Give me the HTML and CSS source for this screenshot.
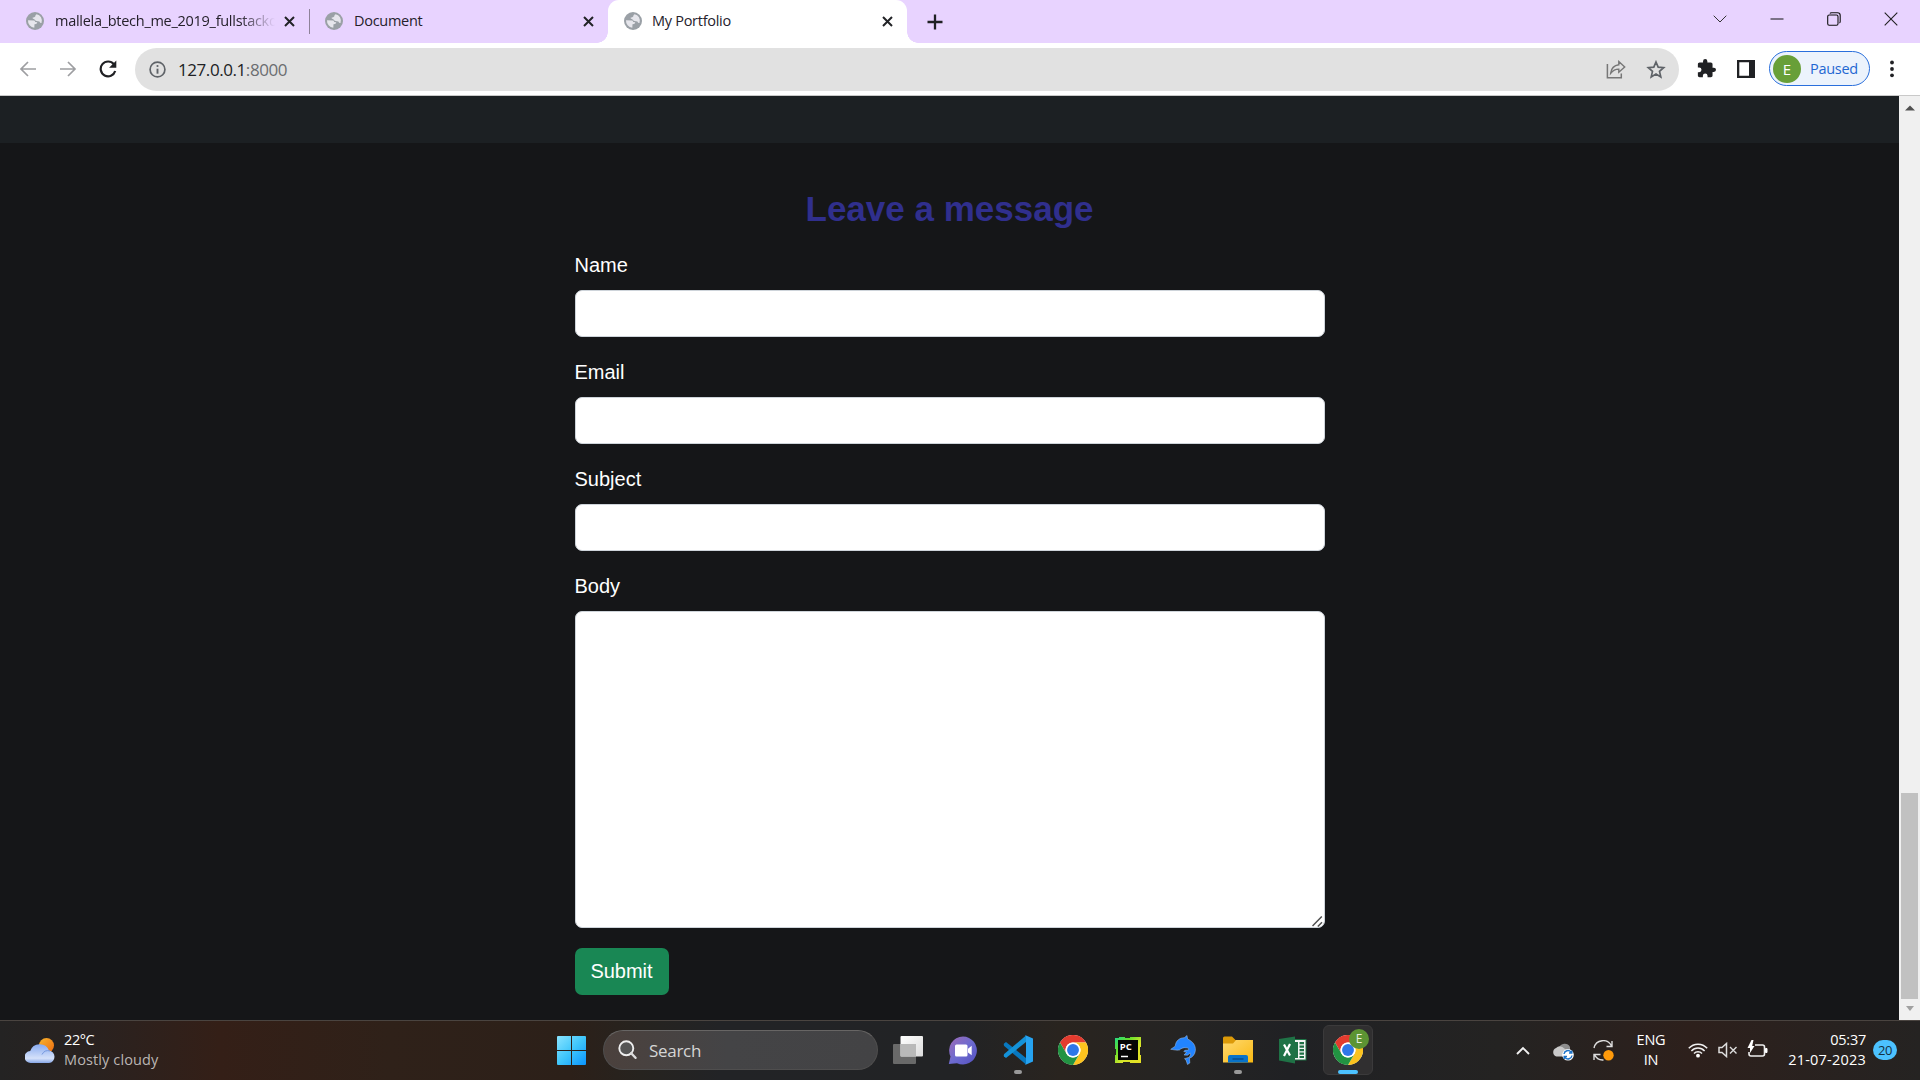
FILE: index.html
```html
<!DOCTYPE html>
<html lang="en">
<head>
<meta charset="utf-8">
<title>My Portfolio</title>
<link rel="stylesheet" href="styles.css">
</head>
<body>
<svg class="defs" width="0" height="0">
  <defs>
    <linearGradient id="gWin" x1="0" y1="0" x2="1" y2="1"><stop offset="0" stop-color="#8ae4ff"/><stop offset=".5" stop-color="#3fc6fb"/><stop offset="1" stop-color="#0a95ff"/></linearGradient>
    <linearGradient id="gSun" x1="0" y1="0" x2="1" y2="1"><stop offset="0" stop-color="#f8b52c"/><stop offset="1" stop-color="#ee6a10"/></linearGradient>
    <linearGradient id="gCloud" x1="0" y1="0" x2="0" y2="1"><stop offset="0" stop-color="#87aaf0"/><stop offset=".75" stop-color="#d5e1fa"/><stop offset="1" stop-color="#86a6e6"/></linearGradient>
    <linearGradient id="gChat" x1="0" y1="0" x2="1" y2="1"><stop offset="0" stop-color="#a06ab4"/><stop offset=".5" stop-color="#6d6bd0"/><stop offset="1" stop-color="#5450c0"/></linearGradient>
    <linearGradient id="gFold" x1="0" y1="0" x2="1" y2="1"><stop offset="0" stop-color="#ffd970"/><stop offset="1" stop-color="#f9b912"/></linearGradient>
    <linearGradient id="gPc" x1="0" y1="0" x2="1" y2="1"><stop offset="0" stop-color="#21d789"/><stop offset=".3" stop-color="#62e02c"/><stop offset=".6" stop-color="#d6e52b"/><stop offset="1" stop-color="#e8e022"/></linearGradient>
    <linearGradient id="gTask" x1="0" y1="0" x2="1" y2="1"><stop offset="0" stop-color="#ffffff"/><stop offset="1" stop-color="#dcdcdc"/></linearGradient>
    <symbol id="globe" viewBox="0 0 18 18"><circle cx="9" cy="9" r="9" fill="#9aa0a6"/><path d="M2 8.300 8.200 8.500Q9 8.600 9.200 10L11.200 10.200Q11.400 11.500 10 12L8.500 12.200 8.300 15.800A7 7 0 0 1 2 8.300ZM10.600 2.200Q13.500 2.600 15 5.200 16.500 8 15.500 11 14 11.200 13.400 9.500L10.500 9Q8.500 8.400 8.200 7 6.500 7 6.500 5.700 8.500 5.500 9.200 4.500Q9.400 2.800 10.600 2.200Z" fill="#e6e6ec"/></symbol>
    <symbol id="cross" viewBox="0 0 11 11"><path d="M1 1l9 9M10 1l-9 9" stroke="#222327" stroke-width="2" fill="none"/></symbol>
    <symbol id="chrome" viewBox="0 0 48 48"><circle cx="24" cy="24" r="24" fill="#fff"/><path d="M24 12h20.800A24 24 0 0 0 3.200 12l10.400 18A12 12 0 0 1 24 12Z" fill="#e33b2e"/><path d="M34.400 30 24 48A24 24 0 0 0 44.800 12H24a12 12 0 0 1 10.400 18Z" fill="#fcc31e"/><path d="M13.600 30 3.200 12A24 24 0 0 0 24 48l10.400-18a12 12 0 0 1-20.800 0Z" fill="#229342"/><circle cx="24" cy="24" r="12" fill="#fff"/><circle cx="24" cy="24" r="9.500" fill="#2f77e8"/></symbol>
  </defs>
</svg>

<header class="tabstrip">
  <div class="tab tab-first">
    <svg class="fav"><use href="#globe"/></svg>
    <span class="tab-title faded">mallela_btech_me_2019_fullstackd</span>
    <svg class="x"><use href="#cross"/></svg>
  </div>
  <div class="tab tab-second">
    <svg class="fav"><use href="#globe"/></svg>
    <span class="tab-title">Document</span>
    <svg class="x"><use href="#cross"/></svg>
  </div>
  <div class="tab tab-active">
    <svg class="fav"><use href="#globe"/></svg>
    <span class="tab-title">My Portfolio</span>
    <svg class="x"><use href="#cross"/></svg>
  </div>
  <svg class="plus" viewBox="0 0 16 16"><path d="M8 .5v15M.5 8h15" stroke="#202124" stroke-width="2.300"/></svg>
  <div class="winctl">
    <svg width="14" height="14" viewBox="0 0 14 14"><path d="M.7 3.700 7 10l6.300-6.300" stroke="#333" fill="none"/></svg>
    <svg width="14" height="14" viewBox="0 0 14 14"><path d="M.5 7h13" stroke="#111"/></svg>
    <svg width="14" height="14" viewBox="0 0 14 14"><rect x=".7" y="3" width="10.300" height="10.300" rx="1.500" fill="none" stroke="#111" stroke-width="1.100"/><path d="M3 1.500Q3.300.8 4.500.8h6q2.700 0 2.700 2.700v6q0 1.200-.8 1.500" fill="none" stroke="#111" stroke-width="1.100"/></svg>
    <svg width="14" height="14" viewBox="0 0 14 14"><path d="M.7.700l12.600 12.600M13.300.700.700 13.300" stroke="#222" stroke-width="1.100"/></svg>
  </div>
</header>

<nav class="toolbar">
  <div class="navbtns">
    <svg width="18" height="18" viewBox="0 0 18 18"><path d="M17 9H2.500M9 2 2 9l7 7" fill="none" stroke="#9d9ea1" stroke-width="1.700"/></svg>
    <svg width="18" height="18" viewBox="0 0 18 18"><path d="M1 9h14.500M9 2l7 7-7 7" fill="none" stroke="#9d9ea1" stroke-width="1.700"/></svg>
    <svg width="18" height="18" viewBox="0 0 18 18"><path d="M14.900 4.300A7.400 7.400 0 1 0 16.200 11" fill="none" stroke="#202124" stroke-width="2.200"/><path d="M17.300.600v7.200H10.100Z" fill="#202124"/></svg>
  </div>
  <div class="omnibox">
    <svg width="17" height="17" viewBox="0 0 17 17"><circle cx="8.500" cy="8.500" r="7.400" fill="none" stroke="#5f6368" stroke-width="1.700"/><path d="M8.500 7.700v5" stroke="#5f6368" stroke-width="1.900"/><circle cx="8.500" cy="5" r="1.100" fill="#5f6368"/></svg>
    <span class="url">127.0.0.1<span class="port">:8000</span></span>
    <svg class="share" width="20" height="19" viewBox="0 0 20 19"><path d="M1.400 4v13.800h13.900v-4.300" fill="none" stroke="#777" stroke-width="1.500"/><path d="M12.800 1.600 18.700 7l-5.900 5.300V9.100C9 9 6.700 10.700 4.700 13.200 5.200 9 7.500 5.500 12.800 4.800Z" fill="none" stroke="#777" stroke-width="1.400"/></svg>
    <svg width="20" height="19" viewBox="0 0 20 19"><path d="M10 2 12.200 7.200l5.500.5-4.200 3.700 1.300 5.500L10 14l-4.800 2.900 1.300-5.500-4.200-3.700 5.500-.5Z" fill="none" stroke="#5f6368" stroke-width="1.700"/></svg>
  </div>
  <svg class="ext" width="19" height="19" viewBox="1 1 22 22"><path d="M20.500 11H19V7c0-1.100-.9-2-2-2h-4V3.500a2.500 2.500 0 0 0-5 0V5H4c-1.100 0-1.990.9-1.990 2v3.800H3.500a2.700 2.700 0 0 1 0 5.400H2V20c0 1.100.9 2 2 2h3.800v-1.500a2.700 2.700 0 0 1 5.400 0V22H17c1.100 0 2-.9 2-2v-4h1.500a2.500 2.500 0 0 0 0-5Z" fill="#202124"/></svg>
  <svg class="side" width="18" height="18" viewBox="0 0 18 18"><path d="M0 0h18v18H0ZM2.300 2.300v13.400H12V2.300Z" fill="#202124" fill-rule="evenodd"/></svg>
  <div class="profile"><span class="avatar">E</span><span class="paused">Paused</span></div>
  <svg class="dots" width="4" height="18" viewBox="0 0 4 18"><circle cx="2" cy="2.500" r="1.900"/><circle cx="2" cy="9" r="1.900"/><circle cx="2" cy="15.300" r="1.900"/></svg>
</nav>

<div class="viewport">
  <main class="page">
    <div class="band"></div>
    <form class="contact">
      <h2>Leave a message</h2>
      <label>Name</label><input type="text">
      <label>Email</label><input type="text">
      <label>Subject</label><input type="text">
      <label>Body</label>
      <div class="area"><textarea></textarea><svg class="grip" viewBox="0 0 11 11"><path d="M.5 10 9.800.5M5.800 10.500 10 6.300" stroke="#505050" stroke-width="1.500"/></svg></div>
      <button type="button">Submit</button>
    </form>
  </main>
  <aside class="scroll">
    <svg width="10" height="6" viewBox="0 0 10 6"><path d="M5 .5 10 5.500H0Z" fill="#505050"/></svg>
    <div class="thumb"></div>
    <svg class="down" width="10" height="6" viewBox="0 0 10 6"><path d="M1 0h8L5 5Z" fill="#a0a0a0"/></svg>
  </aside>
</div>

<footer class="taskbar">
  <div class="weather">
    <svg width="30" height="26" viewBox="0 0 30 26"><circle cx="21.500" cy="7.500" r="7.500" fill="url(#gSun)"/><path d="M6 25a6 6 0 0 1-.8-12A10 10 0 0 1 24 12.500 6.300 6.300 0 0 1 24 25Z" fill="url(#gCloud)"/><path d="M17 16.500a7 7 0 0 1 8-3.600" fill="none" stroke="#7598df" stroke-width="1"/></svg>
    <div class="wtext"><span class="temp">22°C</span><span class="cond">Mostly cloudy</span></div>
  </div>
  <svg class="start" width="29" height="29" viewBox="0 0 29 29"><path d="M1 0h13v14H0V1Q0 0 1 0ZM15 0h13q1 0 1 1v13H15ZM0 15h14v14H1q-1 0-1-1ZM15 15h14v13q0 1-1 1H15Z" fill="url(#gWin)"/></svg>
  <div class="search">
    <svg width="19" height="19" viewBox="0 0 19 19"><circle cx="8.300" cy="8.300" r="7" fill="#555" stroke="#eee" stroke-width="1.900"/><path d="m13.200 13.200 4.300 4.600" stroke="#ddd" stroke-width="2.400" stroke-linecap="round"/></svg>
    <span>Search</span>
  </div>
  <div class="apps">
    <div class="app"><svg width="30" height="28" viewBox="0 0 30 28"><rect y="8" width="23" height="20" rx="1" fill="#696969"/><rect x="7.500" width="22.500" height="20.500" rx="1" fill="url(#gTask)"/><path d="M7.500 8H23v12.500H7.500Z" fill="#b9b9b9"/></svg></div>
    <div class="app"><svg width="30" height="29" viewBox="0 0 30 29"><path d="M15 .5A14 14 0 1 1 9 27.200L.8 28 2.500 20.500A14 14 0 0 1 15 .5Z" fill="url(#gChat)"/><rect x="7" y="8.500" width="12.500" height="12" rx="1.500" fill="#fff"/><path d="m20 12.700 3.700-2.900v9.400L20 16.500Z" fill="#fff"/></svg></div>
    <div class="app open"><svg width="30" height="30" viewBox="0 0 30 30"><path d="M1 8.500 3 7l20 16v6.500L1.200 11Q.4 9.700 1 8.500Z" fill="#0878bf"/><path d="M1 21.500 3 23l20-16V.5L1.200 19q-.8 1.300-.2 2.500Z" fill="#1492d8"/><path d="M22 0 30 3.500v23L22 30q1-1 1-2V2q0-1-1-2Z" fill="#26a3f1"/></svg></div>
    <div class="app"><svg width="30" height="30"><use href="#chrome"/></svg></div>
    <div class="app"><svg width="26" height="26" viewBox="0 0 26 26"><path d="M0 1h4V0h6v1h5V0h11v10h-1v8h1v8H15v-1H8v1H0v-8h1v-6H0Z" fill="url(#gPc)"/><rect x="3" y="3" width="20" height="20" fill="#050505"/><text x="4.700" y="13" class="pc">PC</text><path d="M6 19.500h7" stroke="#fff" stroke-width="1.500"/></svg></div>
    <div class="app"><svg width="26" height="30" viewBox="0 0 26 30"><path d="M.7 14.300 5.200 11.200C5.800 5.500 9.500 2.800 14.300 2.700L17 .5l.6 3.500C23 6.500 25.800 10.500 25.400 15.500 25 19.500 22.500 22.200 19.500 23.200L19.800 28l-2.300 1.500-1.500-4.500-1.500-1.300 4-1.200C20.500 21 20.800 19.500 20.200 18L17.500 20.200 14 20l2.500-2.700L13.800 16.500l1-1.200 3.700-.300C18.800 14 18.500 13 17 12.800 13.500 12.300 11 13.300 9.500 15 6.500 15.500 3.800 14.700.7 14.300Z" fill="#2284ff" stroke="#a9c6ea" stroke-width=".5"/></svg></div>
    <div class="app open"><svg width="30" height="28" viewBox="0 0 30 28"><path d="M0 2q0-1.500 1.500-1.500H9L12.500 4H29q1 0 1 1v5H0Z" fill="#dc9a08"/><path d="M0 7.500h10l3-3.500H30v22.500H0Z" fill="url(#gFold)"/><path d="M5 26.500V21q0-2 2-2h16q2 0 2 2v5.500Z" fill="#0873c9"/><path d="M9.500 23h11" stroke="#064d8c" stroke-width="1.500"/></svg></div>
    <div class="app"><svg width="28" height="28" viewBox="0 0 28 28"><rect x="14" y="3.500" width="13" height="20.500" fill="#f5f5f5" stroke="#1e7145" stroke-width="1"/><path d="M16 6h3v16H16Z M20.500 6H25v2.300h-4.500Zm0 3.500H25v2.300h-4.500Zm0 3.500H25v2.300h-4.500Zm0 3.500H25v2.300h-4.500Zm0 3.500H25v2h-4.500Z" fill="#1e7145"/><path d="M0 3 16 .5v27L0 24.500Z" fill="#1f7246"/><path d="m5 8.500 6 11M11 8l-6 12" stroke="#fff" stroke-width="2.200"/></svg></div>
    <div class="app active"><svg width="30" height="30"><use href="#chrome"/></svg><span class="badge">E</span></div>
  </div>
  <div class="tray">
    <svg class="up" width="14" height="9" viewBox="0 0 14 9"><path d="m1 8 6-6 6 6" fill="none" stroke="#f2f2f2" stroke-width="1.900"/></svg>
    <svg class="cloud" width="21" height="18" viewBox="0 0 21 18"><path d="M6 5a6 6 0 0 1 11-1v6H6Z" fill="#8d8d8d"/><path d="M3.500 13.500A4.500 4.500 0 0 1 3 5q4-4 9 1l4 3-2 4.500Z" fill="#c9c9c9"/><circle cx="15" cy="11.800" r="5.800" fill="#fff"/><path d="M11 11a4 4 0 0 1 7-2m.8-1.500V10H16M19 12.500a4 4 0 0 1-7 2M11.200 16v-2.500H14" fill="none" stroke="#1b72c8" stroke-width="1.400"/></svg>
    <svg class="sync" width="21" height="21" viewBox="0 0 21 21"><path d="M1 8A9.300 9.300 0 0 1 18.500 6M19 1v5.500h-5.500M1 20v-5.500h6.500M1.500 14.500A9 9 0 0 0 10.500 20" fill="none" stroke="#ddd" stroke-width="1.400"/><circle cx="15.500" cy="15.200" r="5.200" fill="#ff9a0b"/></svg>
    <div class="lang"><span>ENG</span><span>IN</span></div>
    <svg class="wifi" width="20" height="16" viewBox="0 0 20 16"><path d="M.8 6.200a12.500 12.500 0 0 1 18.400 0M3.400 8.900a9 9 0 0 1 13.200 0M6 11.500a5.500 5.500 0 0 1 8 0" fill="none" stroke="#f0f0f0" stroke-width="1.500"/><circle cx="10" cy="13.700" r="1.900" fill="#fff"/></svg>
    <svg class="vol" width="20" height="16" viewBox="0 0 20 16"><path d="M1 5.500h3L8.500 1.500v13L4 10.500H1Z" fill="none" stroke="#ddd" stroke-width="1.500"/><path d="m12 5 6.500 6.500m0-6.500L12 11.500" stroke="#ddd" stroke-width="1.400"/></svg>
    <svg class="bat" width="21" height="18" viewBox="0 0 21 18"><path d="M8 5h7.500q2 0 2 2v7q0 2-2 2H4q-2 0-2-2v-2" fill="none" stroke="#eee" stroke-width="1.600"/><path d="M18.500 8.500H20v4h-1.500Z" stroke="#fff" fill="#fff"/><path d="M4.500 0 .5 8H3v5l4.500-7H5.200L6.500 0Z" fill="#fff"/></svg>
    <div class="clock"><span class="time">05:37</span><span class="date">21-07-2023</span></div>
    <span class="count">20</span>
  </div>
</footer>
</body>
</html>
```
FILE: styles.css
```css
* { box-sizing: border-box; }
body { margin: 0; width: 1920px; height: 1080px; overflow: hidden; display: flex; flex-direction: column; background: #151618; font-family: "Open Sans", "Noto Sans", sans-serif; }
svg { display: block; flex: none; }
.defs { position: absolute; }
span { white-space: nowrap; }

/* Tab strip */
.tabstrip { height: 43px; flex: none; display: flex; align-items: center; background: #e8d3ff; }
.tab { height: 43px; display: flex; align-items: center; font-size: 14.5px; color: #25212b; }
.tab-first { width: 310px; padding: 0 15px 0 26px; background: linear-gradient(#8e8299, #8e8299) right 0 center / 1px 25px no-repeat; }
.tab-second { width: 298px; padding: 0 14px 0 15px; }
.tab-active { width: 299px; padding: 0 14px 0 16px; background: #fff; border-radius: 11px 11px 0 0; position: relative; }
.tab-active::before, .tab-active::after { content: ""; position: absolute; bottom: 0; width: 11px; height: 11px; }
.tab-active::before { left: -11px; background: radial-gradient(circle at 0 0, transparent 10.500px, #fff 11px); }
.tab-active::after { right: -11px; background: radial-gradient(circle at 100% 0, transparent 10.500px, #fff 11px); }
.fav { width: 18px; height: 18px; margin-right: 11px; margin-top: -1px; }
.tab-title { flex: 1; overflow: hidden; margin-top: -2px; letter-spacing: -.28px; }
.tab-active .fav { margin-right: 10px; }
.faded { flex: none; width: 220px; margin-right: 9px; -webkit-mask-image: linear-gradient(90deg, #000 84%, transparent 100%); mask-image: linear-gradient(90deg, #000 84%, transparent 100%); }
.x { width: 11px; height: 11px; }
.plus { width: 16px; height: 16px; margin-left: 20px; }
.winctl { margin-left: auto; padding-right: 22px; display: flex; gap: 43px; margin-top: -6px; }

/* Toolbar */
.toolbar { height: 53px; flex: none; display: flex; align-items: center; background: #fff; border-bottom: 1px solid #c9c9c9; }
.navbtns { width: 135px; padding-left: 19px; display: flex; gap: 22px; margin-top: -1px; }
.omnibox { width: 1544px; height: 43px; border-radius: 22px; background: #e1e1e1; display: flex; align-items: center; padding: 0 13px 0 14px; }
.url { margin-left: 12px; font-size: 17px; letter-spacing: -.43px; color: #202124; flex: 1; }
.port { color: #6b6d70; }
.share { margin-right: 20px; }
.ext { margin-left: 18px; margin-top: -2px; }
.side { margin-left: 21px; margin-top: -1px; }
.profile { width: 101px; height: 35px; margin: -1px 0 0 14px; border: 1.500px solid #2a6fdc; border-radius: 18px; background: #ecf3fc; display: flex; align-items: center; padding-left: 3px; }
.avatar { width: 28px; height: 28px; border-radius: 50%; background: #689f38; color: #fff; font-size: 15px; line-height: 28px; text-align: center; }
.paused { margin-left: 9px; font-size: 14.500px; letter-spacing: -.3px; color: #1f67d2; }
.dots { margin-left: 20px; margin-top: -1px; fill: #202124; }

/* Web page */
.viewport { height: 924px; flex: none; display: flex; }
.page { flex: 1; background: #151618; }
.band { height: 47px; background: #1c2023; }
.contact { width: 750px; margin: 0 auto; padding-top: 45px; display: flex; flex-direction: column; font-family: "Liberation Sans", Arial, sans-serif; }
.contact h2 { margin: 0 0 20px; font-size: 35px; line-height: 42px; text-align: center; color: #302f8d; }
.contact label { font-size: 20px; line-height: 30px; color: #fff; margin-bottom: 10px; }
.contact input { height: 47px; border: 1px solid #ced4da; border-radius: 7px; background: #fff; margin-bottom: 20px; }
.area { height: 317px; position: relative; margin-bottom: 20px; }
.area textarea { width: 100%; height: 100%; display: block; resize: none; border: 1px solid #ced4da; border-radius: 7px; background: #fff; }
.grip { position: absolute; right: 2px; bottom: 1px; width: 11px; height: 11px; }
.contact button { align-self: flex-start; width: 94px; height: 47px; padding: 0; border: 0; border-radius: 7px; background: #198754; color: #fff; font: 20px "Liberation Sans", Arial, sans-serif; }
.scroll { width: 21px; background: #f0f0f0; display: flex; flex-direction: column; align-items: center; padding-top: 9px; }
.thumb { width: 17px; height: 206px; background: #c1c1c1; margin-top: 682px; }
.down { margin-top: 7px; }

/* Taskbar */
.taskbar { height: 60px; flex: none; display: flex; align-items: center; border-top: 1px solid #4a4440; color: #fff; background: linear-gradient(90deg, #242323 0, #292220 90px, #341f17 220px, #2f2119 390px, #2c2019 570px, #26231f 640px, #222326 720px, #222325 960px, #29241f 1060px, #252423 1180px, #202124 1290px, #242322 1500px, #2d201c 1690px, #252322 1920px); }
.weather { width: 557px; padding-left: 25px; display: flex; align-items: center; gap: 9px; }
.wtext { display: flex; flex-direction: column; font-size: 14.500px; line-height: 20px; margin-top: -1px; }
.temp { letter-spacing: -.4px; }
.cond { color: #bbb6b4; letter-spacing: .12px; }
.start { margin-right: 17px; margin-top: -1px; }
.search { width: 275px; height: 40px; border-radius: 20px; border: 1px solid #4f4e4e; border-top-color: #676564; background: linear-gradient(90deg, #4b413d, #444446 45%, #434345); display: flex; align-items: center; gap: 12px; padding-left: 14px; color: #d5d5d5; font-size: 17px; letter-spacing: -.3px; margin-top: -1px; }
.search svg { margin-top: -1px; }
.apps { display: flex; gap: 5px; margin-left: 5px; margin-top: -1px; }
.app { width: 50px; height: 50px; border-radius: 6px; display: flex; align-items: center; justify-content: center; position: relative; }
.open::after, .active::after { content: ""; position: absolute; bottom: 1px; width: 8px; height: 4px; border-radius: 2px; background: #999; }
.active { background: #302f30; border: 1px solid #3b3a3b; }
.active::after { bottom: 0; width: 20px; background: #4cc2ff; }
.badge { position: absolute; right: 3px; top: 3px; width: 20px; height: 20px; border-radius: 50%; background: #5c9433; font-size: 12px; line-height: 20px; text-align: center; color: #e7efdf; }
.pc { font: bold 9.500px "Open Sans", sans-serif; fill: #fff; }
.tray { margin-left: auto; display: flex; align-items: center; padding-right: 23px; margin-top: -1px; }
.cloud { margin-left: 23px; margin-top: 4px; }
.sync { margin-left: 19px; }
.lang { width: 40px; margin-left: 17px; display: flex; flex-direction: column; align-items: center; font-size: 14.500px; line-height: 20px; letter-spacing: -.2px; }
.wifi { margin-left: 17px; }
.vol { margin-left: 10px; }
.bat { margin-left: 9px; margin-top: -2px; }
.clock { width: 98px; display: flex; flex-direction: column; align-items: flex-end; font-size: 14.500px; line-height: 20px; margin-top: -1px; }
.time { letter-spacing: -.25px; }
.date { letter-spacing: .22px; }
.count { margin-left: 7px; width: 24px; height: 20px; border-radius: 10px; background: #4cc2ff; color: #15313f; font-size: 13px; letter-spacing: -.4px; line-height: 20px; text-align: center; }
```
